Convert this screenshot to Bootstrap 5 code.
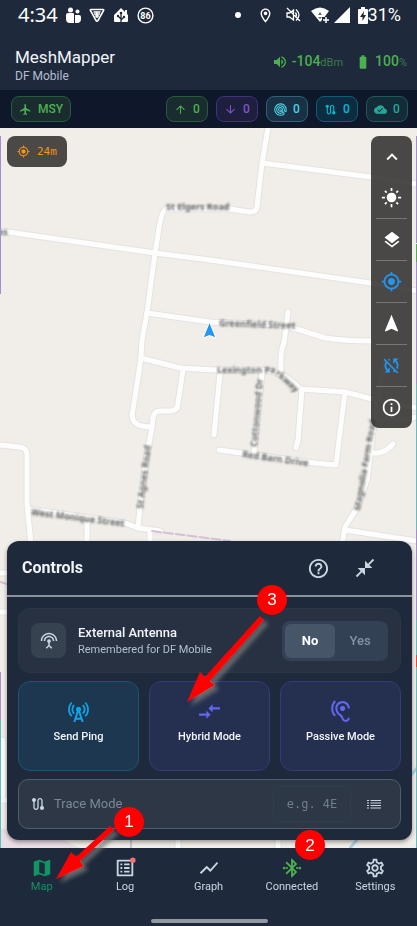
<!DOCTYPE html>
<html lang="en">
<head>
<meta charset="utf-8">
<meta name="viewport" content="width=device-width, initial-scale=1">
<title>MeshMapper</title>
<link href="https://cdn.jsdelivr.net/npm/bootstrap@5.3.0/dist/css/bootstrap.min.css" rel="stylesheet">
<style>
  body { background: #1e293b; color: #f1f5f9; font-family: Roboto, "Liberation Sans", sans-serif; font-size: 12px; line-height: 16px; }
  svg { display: block; flex: none; }
  .ico { fill: currentColor; }
  .status-row { height: 30px; padding: 0 16px 0 18px; color: #fff; }
  .clock { font: 20px/24px "Noto Sans", sans-serif; }
  .charge { font-size: 18px; line-height: 24px; }
  .app-head { height: 60px; padding: 12px 10px 0 15px; }
  .app-name { font-size: 17px; line-height: 22px; font-weight: 400; }
  .muted { color: #b3bfcf; }
  .small-note { font-size: 11px; line-height: 16px; }
  .green { color: #4caf50; }
  .dim { color: #3d7a4c; }
  .stat-val { font-size: 14px; line-height: 18px; font-weight: 500; }
  .stat-unit { font-size: 11px; font-weight: 400; }
  .chips { background: #0f172a; height: 38px; padding: 0 9px 0 11px; }
  .chip { height: 26px; min-width: 42px; border: 1px solid; border-radius: 8px; padding: 0 7px; gap: 6px; font-size: 12px; font-weight: 500; }
  .chip-green { color: #4caf50; background: #1a2c30; border-color: #275c3a; }
  .chip-purple { color: #7e57c2; background: #1e1e3f; border-color: #41327a; }
  .chip-cyan { color: #4dd0e1; background: #1a3145; border-color: #2c6378; }
  .chip-blue { color: #00bcd4; background: #0e2c40; border-color: #0b5f78; }
  .chip-teal { color: #26a69a; background: #142c38; border-color: #1c5a5c; }
  .map-area { background: #f1eee9; padding: 8px 5px 8px 7px; overflow: hidden; }
  .map-art { position: absolute; inset: 0; width: 100%; height: 100%; }
  .floating { position: relative; background: #4a4946; border-radius: 8px; }
  .accuracy { height: 31px; padding: 0 10px; gap: 7px; color: #f59518; font: 11px/16px "DejaVu Sans Mono", monospace; }
  .tools { width: 41px; background: rgba(50, 49, 47, .88); }
  .tool { width: 100%; height: 41px; border: 0; background: none; color: #fff; padding: 0; }
  .tool-line { height: 1px; margin: 0 5px; background: #777673; }
  .blue { color: #2196f3; }
  .panel { position: relative; background: #1e293b; border-radius: 12px; box-shadow: 0 2px 4px rgba(0, 0, 0, .4); }
  .panel-head { height: 54px; padding: 0 36px 0 15px; }
  .panel-title { font-size: 16px; line-height: 20px; font-weight: 700; }
  .panel-rule { height: 2px; background: #8b919c; }
  .panel-body { padding: 11px; gap: 8px; }
  .bare { border: 0; background: none; padding: 0; color: #cbd5e1; }
  .antenna { height: 65px; padding: 0 12px; background: #273142; border: 1px solid #2c3647; border-radius: 12px; }
  .antenna-ico { width: 35px; height: 35px; border-radius: 8px; background: #364250; color: #cbd5e1; }
  .antenna-name { font-size: 13px; line-height: 18px; font-weight: 500; }
  .segment { background: #334155; border-radius: 8px; padding: 3px; width: 106px; height: 40px; }
  .segment label { flex: 1; display: flex; align-items: center; justify-content: center; border-radius: 6px; font-size: 13px; font-weight: 500; color: #8492a6; }
  .segment .btn-check:checked + label { background: #475569; color: #fff; font-weight: 700; }
  .modes { gap: 10px; }
  .mode { flex: 1 1 0; height: 90px; border: 1px solid; border-radius: 12px; font-size: 11px; font-weight: 500; line-height: 16px; color: #f1f5f9; padding: 0 0 8px; gap: 5px; }
  .mode-ping { background: #1c374f; border-color: #1b5475; }
  .mode-ping svg { color: #0ea5e9; }
  .mode-scan { background: #252f50; border-color: #37397a; }
  .mode-scan svg { color: #6366f1; }
  .trace { height: 50px; background: #2d3746; border: 1px solid #525d6b; border-radius: 10px; padding: 0 19px 0 11px; color: #cbd5e1; }
  .trace label { font-size: 13px; color: #7c8796; }
  .trace input { width: 78px; height: 36px; border: 1px solid #2f3f50; border-radius: 8px; background: transparent; color: #cbd5e1; text-align: center; font: 12px/16px "DejaVu Sans Mono", monospace; padding: 0; }
  .trace input::placeholder { color: #717d8d; opacity: 1; }
  .tabs { height: 78px; }
  .tab { flex: 1 1 0; color: #cbd5e1; font-size: 11px; line-height: 16px; padding-top: 9px; text-decoration: none; }
  .tab-on { color: #109565; }
  .home-bar { position: absolute; left: 50%; bottom: 3px; width: 117px; height: 4px; margin-left: -58px; border-radius: 2px; background: #9299a3; }
  .notes { position: absolute; inset: 0; width: 100%; height: 100%; pointer-events: none; }
</style>
<script src="https://cdn.jsdelivr.net/npm/bootstrap@5.3.0/dist/js/bootstrap.bundle.min.js"></script>
</head>
<body>
<div class="position-relative d-flex flex-column min-vh-100">

  <div class="status-row d-flex align-items-center">
    <span class="clock">4:34</span>
    <svg class="ms-2" width="15" height="17" viewBox="0 0 15 17" fill="#fff"><circle cx="4.500" cy="3" r="2.500"/><circle cx="11.500" cy="4.500" r="2"/><path d="M0 8q0-2 2-2h5q1 0 1 1v9H4q-4 0-4-4zM9 8h4q2 0 2 2v2q0 4-4 4H9z"/></svg>
    <svg class="ms-2" width="16" height="15" viewBox="0 0 16 15" fill="none" stroke="#fff" stroke-width="1.600"><path d="M2 1.500h12q1 0 .6 1L9 12.500q-1 1.500-2 0L1.400 2.500Q1 1.500 2 1.500z"/><path d="M4.500 4h7M5 6h6M6 8h4M8 4v6"/></svg>
    <svg class="ms-2" width="16" height="16" viewBox="0 0 16 16"><path fill="#fff" d="M8 1L12 5V3h2v4l1 1v6q0 1-1 1H2q-1 0-1-1V8z"/><path d="M8 6v9M8 12L5 9M8 13L11 10" stroke="#1e293b" stroke-width="1.300"/><circle cx="8" cy="6" r="1.300" fill="#1e293b"/><circle cx="5" cy="9" r="1.200" fill="#1e293b"/><circle cx="11" cy="10" r="1.200" fill="#1e293b"/></svg>
    <svg class="ms-2" width="17" height="17" viewBox="0 0 17 17"><circle cx="8.500" cy="8.500" r="7.400" fill="none" stroke="#fff" stroke-width="1.400"/><text x="8.500" y="12" text-anchor="middle" font-size="9" font-weight="700" fill="#fff">86</text></svg>
    <span class="ms-auto d-flex align-items-center">
      <svg width="6" height="6" viewBox="0 0 6 6"><circle cx="3" cy="3" r="3" fill="#fff"/></svg>
      <svg class="ico ms-3" width="17" height="17" viewBox="0 0 24 24"><path d="M12 2C8.130 2 5 5.130 5 9c0 5.250 7 13 7 13s7-7.750 7-13c0-3.870-3.130-7-7-7zM7 9c0-2.760 2.240-5 5-5s5 2.240 5 5c0 2.880-2.880 7.190-5 9.880C9.920 16.210 7 11.850 7 9z"/><circle cx="12" cy="9" r="2.500"/></svg>
      <svg class="ms-2 me-2 ps-1" width="20" height="16" viewBox="2 0 16 16" fill="none" stroke="#fff" stroke-width="1.300"><path d="M3 6v4h2.500L9.500 13V3L5.500 6zM11.500 5.500q2 2.500 0 5M12 2.500q6 5.500 0 11M3 1l13 13"/></svg>
      <svg width="20" height="17" viewBox="0 0 20 17"><path fill="#fff" d="M1 4q9-7 18 0l-4.500 6H12v3l-2 2-9-11z"/><path d="M10 5l2 3H8zM8 10h4l-2 2z" fill="#1e293b" opacity=".7"/><path d="M16 10v6M13 13h6" stroke="#fff" stroke-width="1.500"/></svg>
      <svg class="ms-1" width="16" height="16" viewBox="0 0 16 16"><path fill="#fff" d="M0 16L16 0v16z"/></svg>
      <svg class="ms-2" width="10" height="17" viewBox="0 0 10 17"><path fill="#fff" d="M3 0h4v2h2q1 0 1 1v13q0 1-1 1H1q-1 0-1-1V3q0-1 1-1h2z"/><path fill="#1e293b" d="M6 4L2 10h2.500v4L8 8H5.500z"/></svg>
      <span class="charge">31%</span>
    </span>
  </div>

  <header class="app-head d-flex justify-content-between">
    <div>
      <h1 class="app-name mt-1 mb-0">MeshMapper</h1>
      <div class="muted">DF Mobile</div>
    </div>
    <div class="d-flex align-items-center green pb-2">
      <svg class="ico" width="16" height="16" viewBox="0 0 24 24"><path d="M3 9v6h4l5 5V4L7 9H3zm13.500 3c0-1.770-1.020-3.290-2.500-4.030v8.050c1.480-.73 2.500-2.250 2.500-4.020zM14 3.230v2.060c2.890.86 5 3.540 5 6.710s-2.110 5.850-5 6.710v2.060c4.010-.91 7-4.490 7-8.770s-2.990-7.860-7-8.770z"/></svg>
      <span class="stat-val ms-1">-104<span class="stat-unit dim">dBm</span></span>
      <svg class="ico ms-2 me-1 ps-1" width="20" height="16" viewBox="0 0 24 24"><path d="M15.670 4H14V2h-4v2H8.330C7.600 4 7 4.600 7 5.330v15.330C7 21.400 7.600 22 8.330 22h7.330c.74 0 1.340-.6 1.340-1.330V5.330C17 4.600 16.400 4 15.670 4z"/></svg>
      <span class="stat-val">100<span class="stat-unit dim">%</span></span>
    </div>
  </header>

  <div class="chips d-flex align-items-center gap-2">
    <span class="chip chip-green d-flex align-items-center me-auto"><svg class="ico" width="13" height="13" viewBox="0 0 24 24"><path d="M21 16v-2l-8-5V3.500c0-.83-.67-1.500-1.500-1.500S10 2.670 10 3.500V9l-8 5v2l8-2.500V19l-2 1.500V22l3.500-1 3.500 1v-1.500L13 19v-5.500l8 2.500z"/></svg>MSY</span>
    <span class="chip chip-green d-flex align-items-center justify-content-center"><svg class="ico" width="13" height="13" viewBox="0 0 24 24"><path d="M4 12l1.410 1.410L11 7.830V20h2V7.830l5.580 5.590L20 12l-8-8-8 8z"/></svg>0</span>
    <span class="chip chip-purple d-flex align-items-center justify-content-center"><svg class="ico" width="13" height="13" viewBox="0 0 24 24"><path d="M20 12l-1.410-1.410L13 16.170V4h-2v12.170l-5.580-5.590L4 12l8 8 8-8z"/></svg>0</span>
    <span class="chip chip-cyan d-flex align-items-center justify-content-center"><svg width="13" height="13" viewBox="0 0 24 24" fill="none" stroke="currentColor" stroke-width="2"><path d="M19.500 19.500A10.500 10.500 0 1 1 22.500 12v4M17 17a7 7 0 1 1 2-5q0 4 3.500 4M12 12l7 7"/><circle cx="12" cy="12" r="3.500"/></svg>0</span>
    <span class="chip chip-blue d-flex align-items-center justify-content-center"><svg class="ico" width="13" height="13" viewBox="0 0 24 24"><use href="#route"/></svg>0</span>
    <span class="chip chip-teal d-flex align-items-center justify-content-center"><svg class="ico" width="13" height="13" viewBox="0 0 24 24"><path d="M19.350 10.040C18.670 6.590 15.640 4 12 4 9.110 4 6.600 5.640 5.350 8.040 2.340 8.360 0 10.910 0 14c0 3.310 2.690 6 6 6h13c2.760 0 5-2.240 5-5 0-2.640-2.050-4.780-4.650-4.960zM10 17l-3.500-3.500 1.410-1.410L10 14.170 15.180 9l1.410 1.410L10 17z"/></svg>0</span>
  </div>

  <main class="map-area position-relative flex-grow-1 d-flex flex-column justify-content-between">
    <svg class="map-art" viewBox="0 128 417 720" preserveAspectRatio="xMidYMid slice" aria-label="Street map">
      <defs>
        <path id="route" d="M19 15.180V7c0-2.210-1.790-4-4-4s-4 1.790-4 4v10c0 1.100-.9 2-2 2s-2-.9-2-2V8.820C8.160 8.400 9 7.300 9 6c0-1.660-1.340-3-3-3S3 4.340 3 6c0 1.300.84 2.400 2 2.820V17c0 2.210 1.790 4 4 4s4-1.790 4-4V7c0-1.100.9-2 2-2s2 .9 2 2v8.180c-1.160.41-2 1.510-2 2.820 0 1.660 1.340 3 3 3s3-1.340 3-3c0-1.300-.84-2.400-2-2.820z"/>
        <path id="locate" d="M12 8c-2.210 0-4 1.790-4 4s1.790 4 4 4 4-1.790 4-4-1.790-4-4-4zm8.940 3c-.46-4.170-3.770-7.480-7.940-7.940V1h-2v2.060C6.830 3.520 3.520 6.830 3.060 11H1v2h2.060c.46 4.170 3.770 7.480 7.940 7.940V23h2v-2.060c4.170-.46 7.480-3.770 7.940-7.940H23v-2h-2.060zM12 19c-3.870 0-7-3.130-7-7s3.130-7 7-7 7 3.130 7 7-3.130 7-7 7z"/>
        <g id="roads">
          <path d="M0 231L8 232 155 253 210 260 370 283 417 291"/>
          <path d="M232 209H166Q161 211 158 235L155 253 150 290 147 313 142 340 141 358 135 397 132 415Q132 427 152 427"/>
          <path d="M228 209L250 212Q256 212 257 207L262 163 268 128M262 163L371 177 417 184"/>
          <path d="M147 313L210 322 280 325 300 330 325 338Q345 341 371 341"/>
          <path d="M141 358L180 368 215 370 262 370Q285 372 300 389L345 392 372 399 417 408"/>
          <path d="M183 370L178 403Q178 411 170 411H160Q154 411 153 418L152 427 146 460 140 507 138 528"/>
          <path d="M288 312L284 343Q280 350 281 370M220 373L214 435M262 373L258 410 254 452M302 389L298 440 296 448M345 392L339 440 336 465 314 463 219 450"/>
          <path d="M384 365L376 410 372 440 367 480 357 508 345 527 342 545M345 530L417 541M371 453H378Q386 452 393 444M378 420H403L417 417"/>
          <path d="M0 445L20 447Q27 448 27 455L27 503 31 545M28 509L125 523 138 528 160 531M87 523V545M150 531V545"/>
          <path d="M0 573H7M0 612H7M3 740V795M0 800H7M178 840V850M278 840V850"/>
        </g>
        <filter id="soft" x="-20%" y="-20%" width="140%" height="140%"><feGaussianBlur stdDeviation=".9"/></filter>
      </defs>
      <rect y="128" width="417" height="720" fill="#f1eee9"/>
      <path d="M0 828L60 838 80 848H0z" fill="#eadde4"/>
      <path d="M350 848L417 768" stroke="#aad3df" stroke-width="3"/>
      <g fill="none" stroke-linejoin="round" stroke-linecap="round">
        <use href="#roads" stroke="#e5e3e0" stroke-width="7"/>
        <use href="#roads" stroke="#fdfdfd" stroke-width="5"/>
        <path d="M152 531L230 541M0 582L7 584M131 840V848" stroke="#d5bfd3" stroke-width="2" stroke-dasharray="9 3"/>
      </g>
      <g fill="#606060" font-size="9" font-weight="700" filter="url(#soft)" font-family="Noto Sans, sans-serif">
        <text x="166" y="210">St Elgers Road</text>
        <text x="-2" y="235">es</text>
        <text transform="translate(219 326) rotate(2)">Greenfield Street</text>
        <text transform="translate(217 373)">Lexington Pa</text>
        <text transform="translate(275 374) rotate(42)">rkway</text>
        <text transform="translate(257 447) rotate(-85)">Cottonwood Dr</text>
        <text transform="translate(242 457) rotate(8)">Red Barn Drive</text>
        <text transform="translate(143 509) rotate(-83)">St Agnes Road</text>
        <text transform="translate(31 515) rotate(7)">West Monique Street</text>
        <text transform="translate(360 511) rotate(-80)">Magnolia Farm Road</text>
      </g>
      <path d="M209.500 322L216 338 209.500 335.500 203 338z" fill="#2196f3" stroke="#fff"/>
      <path d="M.5 136V294M.5 672V720M416.500 136V243M416.500 262V384M416.500 530V620" stroke="#a58bd4" stroke-width="1"/>
      <path d="M.5 720V848M416.500 384V530M416.500 620V848" stroke="#62bcc0" stroke-width="1"/>
      <path d="M416.500 244V262" stroke="#4caf50"/><path d="M416.500 655V667" stroke="#f44336"/>
    </svg>

    <div class="d-flex justify-content-between align-items-start">
      <div class="floating accuracy d-flex align-items-center"><svg class="ico" width="13" height="13" viewBox="0 0 24 24"><use href="#locate"/></svg>24m</div>
      <div class="floating tools">
        <button class="tool d-flex align-items-center justify-content-center" aria-label="Collapse"><svg class="ico" width="22" height="22" viewBox="0 0 24 24"><path d="M12 8l-6 6 1.410 1.410L12 10.830l4.590 4.580L18 14z"/></svg></button>
        <button class="tool d-flex align-items-center justify-content-center" aria-label="Light mode"><svg class="ico" width="21" height="21" viewBox="0 0 24 24"><circle cx="12" cy="12" r="5.500"/><path d="M12 1v3.500M12 19.500V23M1 12h3.500M19.500 12H23M4.500 4.500l2 2M17.500 17.500l2 2M4.500 19.500l2-2M17.500 6.500l2-2" stroke="currentColor" stroke-width="2"/></svg></button>
        <div class="tool-line"></div>
        <button class="tool d-flex align-items-center justify-content-center" aria-label="Layers"><svg class="ico" width="20" height="20" viewBox="0 0 24 24"><path d="M11.990 18.540l-7.370-5.730L3 14.070l9 7 9-7-1.630-1.270-7.380 5.740zM12 16l7.360-5.730L21 9l-9-7-9 7 1.630 1.270L12 16z"/></svg></button>
        <div class="tool-line"></div>
        <button class="tool blue d-flex align-items-center justify-content-center" aria-label="Center on me"><svg class="ico" width="21" height="21" viewBox="0 0 24 24"><use href="#locate"/></svg></button>
        <div class="tool-line"></div>
        <button class="tool d-flex align-items-center justify-content-center" aria-label="Heading up"><svg class="ico" width="21" height="21" viewBox="0 0 24 24"><path d="M12 2L4.500 20.290l.71.71L12 18l6.790 3 .71-.71z"/></svg></button>
        <div class="tool-line"></div>
        <button class="tool blue d-flex align-items-center justify-content-center" aria-label="Rotation off"><svg class="ico" width="21" height="21" viewBox="0 0 24 24"><path d="M10 6.350V4.260c-.8.210-1.550.54-2.230.96l1.460 1.460c.25-.12.5-.24.77-.33zm-7.140-.94l2.360 2.360C4.450 8.990 4 10.440 4 12c0 2.210.91 4.200 2.360 5.640L4 20h6v-6l-2.240 2.240C6.680 15.150 6 13.660 6 12c0-1 .25-1.940.68-2.770l8.080 8.080c-.25.13-.5.25-.77.34v2.090c.8-.21 1.550-.54 2.230-.96l2.360 2.360 1.270-1.270L4.140 4.140 2.860 5.410zM20 4h-6v6l2.240-2.240C17.320 8.850 18 10.340 18 12c0 1-.25 1.940-.68 2.770l1.460 1.460C19.550 15.010 20 13.560 20 12c0-2.210-.91-4.200-2.360-5.640L20 4z"/></svg></button>
        <div class="tool-line"></div>
        <button class="tool d-flex align-items-center justify-content-center" aria-label="Info"><svg class="ico" width="21" height="21" viewBox="0 0 24 24"><path d="M11 7h2v2h-2zm0 4h2v6h-2zm1-9C6.480 2 2 6.480 2 12s4.480 10 10 10 10-4.480 10-10S17.520 2 12 2zm0 18c-4.410 0-8-3.590-8-8s3.590-8 8-8 8 3.590 8 8-3.590 8-8 8z"/></svg></button>
      </div>
    </div>

    <section class="panel">
      <div class="panel-head d-flex align-items-center">
        <h2 class="panel-title mb-0 me-auto">Controls</h2>
        <button class="bare me-4" aria-label="Help"><svg class="ico" width="23" height="23" viewBox="0 0 24 24"><path d="M11 18h2v-2h-2v2zm1-16C6.480 2 2 6.480 2 12s4.480 10 10 10 10-4.480 10-10S17.520 2 12 2zm0 18c-4.410 0-8-3.590-8-8s3.590-8 8-8 8 3.590 8 8-3.590 8-8 8zm0-14c-2.210 0-4 1.790-4 4h2c0-1.100.9-2 2-2s2 .9 2 2c0 2-3 1.750-3 5h2c0-2.250 3-2.500 3-5 0-2.210-1.790-4-4-4z"/></svg></button>
        <button class="bare" aria-label="Minimize"><svg class="ico" width="22" height="22" viewBox="0 0 24 24"><path d="M22 3.410L16.710 8.700 20 12h-8V4l3.290 3.290L20.590 2 22 3.410zM3.410 22l5.290-5.290L12 20v-8H4l3.290 3.290L2 20.590 3.410 22z"/></svg></button>
      </div>
      <div class="panel-rule"></div>
      <div class="panel-body d-flex flex-column">
        <div class="antenna d-flex align-items-center">
          <span class="antenna-ico d-flex align-items-center justify-content-center"><svg class="ico" width="18" height="18" viewBox="0 0 24 24"><path d="M12 5c-3.870 0-7 3.130-7 7h2c0-2.760 2.240-5 5-5s5 2.240 5 5h2c0-3.870-3.130-7-7-7zm1 9.290c.88-.39 1.500-1.260 1.500-2.290 0-1.380-1.120-2.500-2.500-2.500S9.500 10.620 9.500 12c0 1.020.62 1.900 1.500 2.290v3.300L7.590 21 9 22.410l3-3 3 3L16.410 21 13 17.590v-3.300zM12 1C5.930 1 1 5.930 1 12h2c0-4.970 4.030-9 9-9s9 4.030 9 9h2c0-6.070-4.930-11-11-11z"/></svg></span>
          <div class="ms-2 ps-1 me-auto">
            <div class="antenna-name">External Antenna</div>
            <div class="muted small-note">Remembered for DF Mobile</div>
          </div>
          <div class="segment d-flex" role="group" aria-label="External Antenna">
            <input class="btn-check" type="radio" name="antenna" id="antenna-no" checked><label for="antenna-no">No</label>
            <input class="btn-check" type="radio" name="antenna" id="antenna-yes"><label for="antenna-yes">Yes</label>
          </div>
        </div>
        <div class="modes d-flex">
          <button class="mode mode-ping d-flex flex-column align-items-center justify-content-center"><svg class="ico" width="25" height="25" viewBox="0 0 24 24"><path d="M7.300 14.700l1.200-1.200c-1-1-1.500-2.300-1.500-3.500 0-1.300.5-2.600 1.500-3.500L7.300 5.300c-1.300 1.300-2 3-2 4.700s.7 3.400 2 4.700zM19.100 2.900l-1.200 1.200c1.600 1.600 2.400 3.800 2.400 5.900 0 2.100-.8 4.300-2.400 5.900l1.200 1.200c2-2 2.900-4.500 2.900-7.100 0-2.600-1-5.100-2.900-7.100zM6.100 4.100L4.900 2.900C3 4.900 2 7.400 2 10c0 2.600 1 5.100 2.900 7.100l1.200-1.200c-1.600-1.600-2.400-3.800-2.400-5.900 0-2.100.8-4.300 2.400-5.900zM16.700 14.700c1.300-1.300 2-3 2-4.700-.1-1.700-.7-3.400-2-4.700l-1.200 1.200c1 1 1.500 2.300 1.500 3.500 0 1.300-.5 2.600-1.500 3.500l1.200 1.200zM14.500 10c0-1.380-1.120-2.500-2.500-2.500S9.500 8.620 9.500 10c0 .76.34 1.420.87 1.880L7 22h2l.67-2h4.670l.66 2h2l-3.370-10.120c.53-.46.87-1.120.87-1.880zM10.330 18L12 13l1.670 5h-3.340z"/></svg>Send Ping</button>
          <button class="mode mode-scan d-flex flex-column align-items-center justify-content-center"><svg class="ico" width="25" height="25" viewBox="0 0 24 24"><path d="M9.010 14H2v2h7.010v3L13 15l-3.990-4v3zm5.980-1v-3H22V8h-7.010V5L11 9l3.990 4z"/></svg>Hybrid Mode</button>
          <button class="mode mode-scan d-flex flex-column align-items-center justify-content-center"><svg class="ico" width="25" height="25" viewBox="0 0 24 24"><path d="M17 20c-.29 0-.56-.06-.76-.15-.71-.37-1.210-.88-1.710-2.380-.51-1.560-1.470-2.290-2.390-3-.79-.61-1.610-1.240-2.320-2.530C9.290 10.980 9 9.930 9 9c0-2.800 2.200-5 5-5s5 2.200 5 5h2c0-3.930-3.070-7-7-7S7 5.070 7 9c0 1.260.38 2.650 1.070 3.900.91 1.650 1.980 2.480 2.850 3.150.81.62 1.390 1.070 1.710 2.050.6 1.820 1.370 2.840 2.730 3.550.51.23 1.070.35 1.640.35 2.210 0 4-1.790 4-4h-2c0 1.100-.9 2-2 2zM7.640 2.640L6.220 1.220C4.230 3.210 3 5.960 3 9s1.230 5.790 3.220 7.780l1.410-1.410C6.010 13.740 5 11.490 5 9s1.010-4.740 2.640-6.360zM11.500 9c0 1.380 1.120 2.500 2.500 2.500s2.500-1.120 2.500-2.500-1.120-2.500-2.500-2.500-2.500 1.120-2.500 2.500z"/></svg>Passive Mode</button>
        </div>
        <div class="trace d-flex align-items-center">
          <svg class="ico me-2" width="16" height="16" viewBox="0 0 24 24"><use href="#route"/></svg>
          <label for="trace-id" class="me-auto">Trace Mode</label>
          <input id="trace-id" type="text" placeholder="e.g. 4E">
          <button class="bare ms-3" aria-label="Trace list"><svg width="14" height="14" viewBox="0 0 14 14" stroke="currentColor" fill="none"><path d="M0 3.500h2M0 6h2M0 8.500h2M0 11h2M3.500 3.500H14M3.500 6H14M3.500 8.500H14M3.500 11H14" stroke-width="1.100"/></svg></button>
        </div>
      </div>
    </section>
  </main>

  <nav class="tabs position-relative d-flex">
    <a href="#map" class="tab tab-on d-flex flex-column align-items-center"><svg class="ico" width="22" height="22" viewBox="0 0 24 24"><path d="M20.500 3l-.16.03L15 5.100 9 3 3.360 4.900c-.21.07-.36.25-.36.48V20.500c0 .28.22.5.5.5l.16-.03L9 18.900l6 2.100 5.640-1.900c.21-.07.36-.25.36-.48V3.500c0-.28-.22-.5-.5-.5zM15 19l-6-2.110V5l6 2.110V19z"/></svg>Map</a>
    <a href="#log" class="tab d-flex flex-column align-items-center"><svg class="ico overflow-visible" width="22" height="22" viewBox="0 0 24 24"><path d="M19 5v14H5V5h14m1.100-2H3.900c-.5 0-.9.4-.9.9v16.200c0 .4.4.9.9.9h16.200c.4 0 .9-.5.9-.9V3.900c0-.5-.5-.9-.9-.9zM11 7h6v2h-6V7zm0 4h6v2h-6v-2zm0 4h6v2h-6zM7 7h2v2H7zm0 4h2v2H7zm0 4h2v2H7z"/><circle cx="20.500" cy="3.500" r="3" fill="#f87171"/></svg>Log</a>
    <a href="#graph" class="tab d-flex flex-column align-items-center"><svg class="ico" width="22" height="22" viewBox="0 0 24 24"><path d="M3.500 18.490l6-6.010 4 4L22 6.920l-1.410-1.410-7.090 7.970-4-4L2 16.990z"/></svg>Graph</a>
    <a href="#connection" class="tab d-flex flex-column align-items-center"><svg class="ico green" width="22" height="22" viewBox="0 0 24 24"><path d="M17.710 7.710L12 2h-1v7.590L6.410 5 5 6.410 10.590 12 5 17.590 6.410 19 11 14.410V22h1l5.710-5.710-4.300-4.290 4.300-4.290zM13 5.830l1.880 1.880L13 9.590V5.830zm1.880 10.460L13 18.170v-3.760l1.880 1.880z"/><circle cx="3.500" cy="12" r="1.500"/><circle cx="6.500" cy="12" r="1.200"/><circle cx="17.500" cy="12" r="1.200"/><circle cx="20.500" cy="12" r="1.500"/></svg>Connected</a>
    <a href="#settings" class="tab d-flex flex-column align-items-center"><svg class="ico" width="22" height="22" viewBox="0 0 24 24"><path d="M19.430 12.980c.04-.32.07-.64.07-.98 0-.34-.03-.66-.07-.98l2.110-1.650c.19-.15.24-.42.12-.64l-2-3.460c-.09-.16-.26-.25-.44-.25-.06 0-.12.01-.17.03l-2.490 1c-.52-.4-1.080-.73-1.690-.98l-.38-2.650C14.460 2.180 14.250 2 14 2h-4c-.25 0-.46.18-.49.42l-.38 2.650c-.61.25-1.170.59-1.690.98l-2.490-1c-.06-.02-.12-.03-.18-.03-.17 0-.34.09-.43.25l-2 3.460c-.13.22-.07.49.12.64l2.110 1.650c-.04.32-.07.65-.07.98 0 .33.03.66.07.98l-2.110 1.650c-.19.15-.24.42-.12.64l2 3.460c.09.16.26.25.44.25.06 0 .12-.01.17-.03l2.490-1c.52.4 1.080.73 1.690.98l.38 2.650c.03.24.24.42.49.42h4c.25 0 .46-.18.49-.42l.38-2.650c.61-.25 1.170-.59 1.690-.98l2.490 1c.06.02.12.03.18.03.17 0 .34-.09.43-.25l2-3.460c.12-.22.07-.49-.12-.64l-2.110-1.650zm-1.980-1.710c.04.31.05.52.05.73 0 .21-.02.43-.05.73l-.14 1.130.89.7 1.080.84-.7 1.210-1.270-.51-1.040-.42-.9.68c-.43.32-.84.56-1.250.73l-1.060.43-.16 1.130-.2 1.350h-1.400l-.19-1.350-.16-1.130-1.060-.43c-.43-.18-.83-.41-1.230-.71l-.91-.7-1.060.43-1.270.51-.7-1.210 1.080-.84.89-.7-.14-1.130c-.03-.31-.05-.54-.05-.74s.02-.43.05-.73l.14-1.130-.89-.7-1.080-.84.7-1.210 1.270.51 1.040.42.9-.68c.43-.32.84-.56 1.250-.73l1.060-.43.16-1.130.2-1.350h1.390l.19 1.350.16 1.130 1.060.43c.43.18.83.41 1.230.71l.91.7 1.060-.43 1.270-.51.7 1.210-1.070.85-.89.7.14 1.130zM12 8c-2.210 0-4 1.790-4 4s1.790 4 4 4 4-1.790 4-4-1.790-4-4-4zm0 6c-1.100 0-2-.9-2-2s.9-2 2-2 2 .9 2 2-.9 2-2 2z"/></svg>Settings</a>
    <div class="home-bar"></div>
  </nav>

  <svg class="notes" viewBox="0 0 417 926">
    <defs><filter id="drop" x="-20%" y="-20%" width="150%" height="150%"><feDropShadow dx="4" dy="4" stdDeviation="2" flood-color="#777" flood-opacity=".8"/></filter></defs>
    <g fill="#f00" filter="url(#drop)">
      <path d="M260 616L264 620 210 681 215 685 187 702 200 672 205 677z"/>
      <path d="M110 826L114 830 80 861 84 866 56 879 71 852 76 857z"/>
    </g>
    <g fill="#f00"><circle cx="272" cy="600" r="15"/><circle cx="129" cy="822" r="15"/><circle cx="310" cy="845" r="15"/></g>
    <g fill="#fff" font-size="17" text-anchor="middle" font-family="Liberation Sans, sans-serif"><text x="272" y="605">3</text><text x="129" y="827">1</text><text x="310" y="851">2</text></g>
  </svg>
</div>
</body>
</html>
